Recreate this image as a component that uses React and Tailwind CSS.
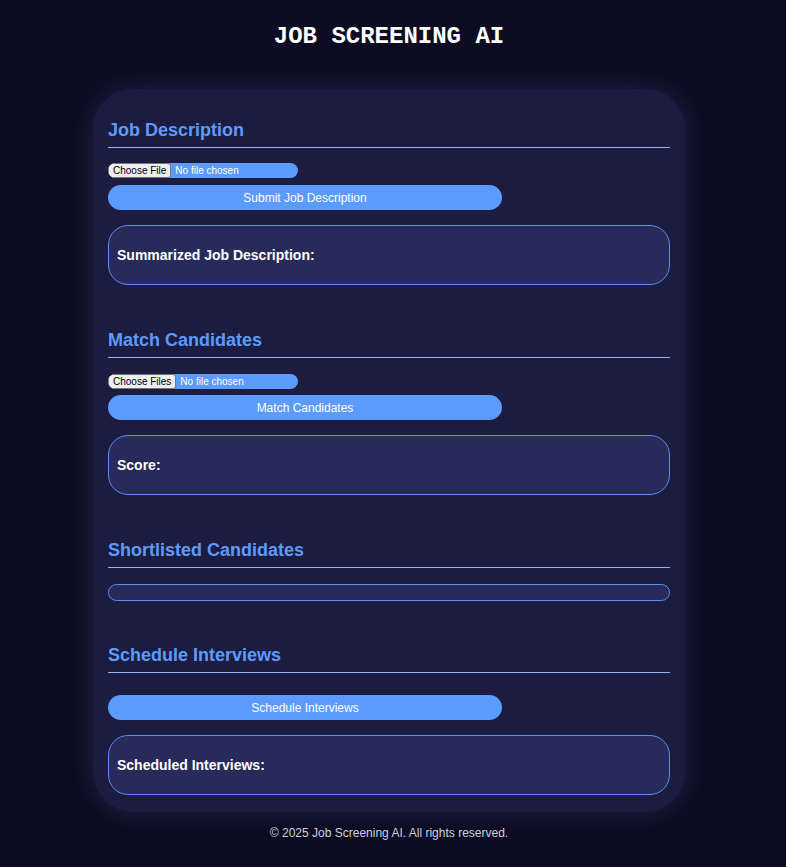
import React from 'react';

function Heading({ children }) {
  return (
    <h2 className="text-[18px] leading-[21px] font-bold text-[#5b9bff] pb-[6px] border-b border-[#8fb6f7]">
      {children}
    </h2>
  );
}

function FileInput({ multiple }) {
  return (
    <input
      type="file"
      multiple={multiple}
      className="block w-[190px] h-[15px] bg-[#5b9bfb] text-white text-[10px] leading-[13px] rounded-lg file:h-[15px] file:bg-[#efefef] file:text-black file:border file:border-solid file:border-[#767676] file:rounded-[3px] file:px-[4px] file:mr-[4px]"
    />
  );
}

function ActionButton({ children }) {
  return (
    <button className="block w-[394px] h-[25px] bg-[#5b9bfb] text-white text-[12px] rounded-full">
      {children}
    </button>
  );
}

function ResultBox({ label }) {
  return (
    <div className="h-[60px] flex items-center px-[8px] bg-[#282a5a] border border-[#5b8ff0] rounded-[20px]">
      <p className="text-[14px] font-bold text-white">{label}</p>
    </div>
  );
}

export default function App() {
  return (
    <div className="min-h-screen bg-[#0e0c22] text-white pr-[8px]" style={{ fontFamily: '"Liberation Sans", Arial, sans-serif' }}>
      <h1
        className="pt-[24px] pb-[39px] text-center text-[24px] leading-[26px] font-bold text-white"
        style={{ fontFamily: '"Courier New", "Liberation Mono", monospace' }}
      >
        JOB SCREENING AI
      </h1>

      <main className="w-[592px] mx-auto bg-[#1c1c40] rounded-[40px] px-[15px] pt-[31px] pb-[17px] shadow-[0_0_22px_rgba(50,50,110,0.55)]">
        <section>
          <Heading>Job Description</Heading>
          <div className="mt-[15px]"><FileInput /></div>
          <div className="mt-[7px]"><ActionButton>Submit Job Description</ActionButton></div>
          <div className="mt-[15px]"><ResultBox label="Summarized Job Description:" /></div>
        </section>

        <section className="mt-[45px]">
          <Heading>Match Candidates</Heading>
          <div className="mt-[16px]"><FileInput multiple /></div>
          <div className="mt-[6px]"><ActionButton>Match Candidates</ActionButton></div>
          <div className="mt-[15px]"><ResultBox label="Score:" /></div>
        </section>

        <section className="mt-[45px]">
          <Heading>Shortlisted Candidates</Heading>
          <div className="mt-[16px] h-[17px] bg-[#282a5a] border border-[#5b8ff0] rounded-[9px]"></div>
        </section>

        <section className="mt-[44px]">
          <Heading>Schedule Interviews</Heading>
          <div className="mt-[22px]"><ActionButton>Schedule Interviews</ActionButton></div>
          <div className="mt-[15px]"><ResultBox label="Scheduled Interviews:" /></div>
        </section>
      </main>

      <footer className="pt-[12px] pb-[20px] text-center text-[12px] text-[#d0d0d8]">
        © 2025 Job Screening AI. All rights reserved.
      </footer>
    </div>
  );
}
